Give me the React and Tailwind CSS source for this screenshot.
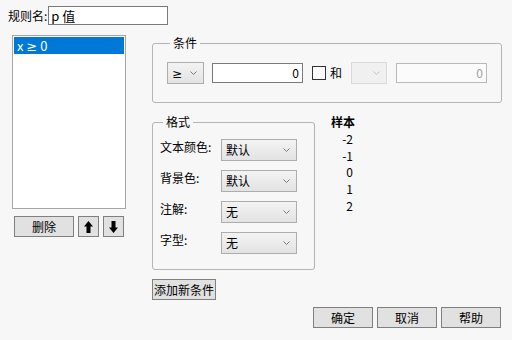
import React from 'react';

const font = { fontFamily: '"Noto Sans CJK SC", "Noto Sans", sans-serif' };

function Chevron({ light }) {
  return (
    <svg width="7" height="4" viewBox="0 0 7 4" className="shrink-0">
      <path d="M0.5 0.5 L3.5 3.5 L6.5 0.5" fill="none" stroke={light ? '#c4c4c4' : '#7a7a7a'} strokeWidth="1" />
    </svg>
  );
}

function Select({ value, className = '' }) {
  return (
    <div className={`flex items-center justify-between h-[22px] border border-[#adadad] bg-gradient-to-b from-[#f3f3f3] to-[#e3e3e3] pl-[4px] pr-[6px] ${className}`}>
      <span className="leading-[14px]">{value}</span>
      <Chevron />
    </div>
  );
}

function Btn({ children, className = '' }) {
  return (
    <div className={`flex items-center justify-center border border-[#7f7f7f] bg-[#e1e1e1] leading-[14px] ${className}`}>
      {children}
    </div>
  );
}

function Arrow({ down }) {
  return (
    <svg width="9" height="12" viewBox="0 0 9 12" className={down ? 'rotate-180' : ''}>
      <polygon points="4.5,0 9,5.5 6.5,5.5 6.5,12 2.5,12 2.5,5.5 0,5.5" fill="#000" />
    </svg>
  );
}

// the ≥ glyph in the CJK font is slanted; DejaVu gives the plain form
const Ge = () => <span className="font-['DejaVu_Sans']">≥</span>;

const formatRows = [
  ['文本颜色:', '默认'],
  ['背景色:', '默认'],
  ['注解:', '无'],
  ['字型:', '无'],
];

export default function App() {
  return (
    <div style={font} className="w-[512px] h-[340px] bg-[#f7f7f7] text-[12px] text-black overflow-hidden">
      {/* rule name */}
      <div className="flex items-center pt-[6px] pl-[8px]">
        <span className="leading-[14px]">规则名:</span>
        <div className="ml-[1px] w-[120px] h-[19px] border border-[#7a7a7a] bg-white flex items-center pl-[2px] text-[13px] leading-[15px]">
          p 值
        </div>
      </div>

      <div className="flex mt-[10px]">
        {/* left: rule list */}
        <div className="ml-[12px] w-[114px]">
          <div className="h-[174px] border border-[#a5a5a5] bg-white p-[1px]">
            <div className="h-[17px] bg-[#0078d7] text-white pl-[3px] leading-[17px] text-[13px]">x <Ge /> 0</div>
          </div>
          <div className="flex gap-[4px] mt-[7px] ml-[2px]">
            <Btn className="w-[60px] h-[21px]">删除</Btn>
            <Btn className="w-[21px] h-[21px]"><Arrow /></Btn>
            <Btn className="w-[21px] h-[21px]"><Arrow down /></Btn>
          </div>
        </div>

        {/* right */}
        <div className="ml-[26px] flex flex-col mt-[1px]">
          <fieldset className="w-[350px] border border-[#b4b4b4] rounded-[3px] pl-[14px] pt-[12px] pb-[18px]">
            <legend className="ml-[3px] px-[3px] leading-[14px]">条件</legend>
            <div className="flex items-center">
              <Select value={<Ge />} className="w-[37px]" />
              <div className="ml-[8px] w-[91px] h-[20px] border border-[#7a7a7a] bg-white text-right pr-[3px] leading-[18px]">0</div>
              <div className="ml-[9px] w-[14px] h-[14px] border border-[#333] bg-white" />
              <span className="ml-[4px] leading-[14px]">和</span>
              <div className="ml-[9px] w-[36px] h-[22px] border border-[#d9d9d9] bg-[#f0f0f0] flex items-center justify-end pr-[6px]">
                <Chevron light />
              </div>
              <div className="ml-[9px] w-[91px] h-[20px] border border-[#b9b9b9] bg-[#fbfbfb] text-right pr-[3px] leading-[18px] text-[#a0a0a0]">0</div>
            </div>
          </fieldset>

          <div className="flex mt-[12px]">
            <fieldset className="w-[163px] border border-[#b4b4b4] rounded-[3px] pl-[7px] pt-[10px] pb-[15px]">
              <legend className="ml-[3px] px-[3px] leading-[14px]">格式</legend>
              <div className="flex flex-col gap-[9px]">
                {formatRows.map(([label, value]) => (
                  <div key={label} className="flex items-start">
                    <span className="w-[61px] leading-[14px] pt-[1px]">{label}</span>
                    <Select value={value} className="w-[76px]" />
                  </div>
                ))}
              </div>
            </fieldset>

            <div className="ml-[16px] flex flex-col">
              <span className="font-bold leading-[14px]">样本</span>
              <div className="w-[22px] text-right leading-[16.7px] mt-[2px]">
                <div>-2</div>
                <div>-1</div>
                <div>0</div>
                <div>1</div>
                <div>2</div>
              </div>
            </div>
          </div>

          <Btn className="mt-[9px] w-[64px] h-[21px] px-[1px]">添加新条件</Btn>
        </div>
      </div>

      <div className="flex justify-end gap-[4px] pr-[11px] mt-[7px]">
        <Btn className="w-[60px] h-[21px]">确定</Btn>
        <Btn className="w-[60px] h-[21px]">取消</Btn>
        <Btn className="w-[60px] h-[21px]">帮助</Btn>
      </div>
    </div>
  );
}
